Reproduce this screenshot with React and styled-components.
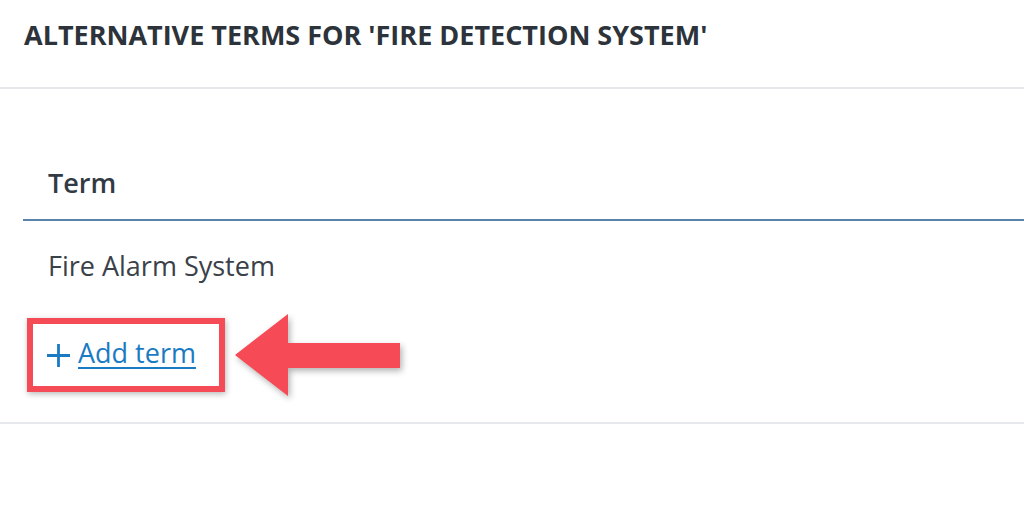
import React from "react";
import styled, { createGlobalStyle } from "styled-components";

const Global = createGlobalStyle`
  html, body { margin: 0; padding: 0; background: #ffffff; }
  body { font-family: "Open Sans", "Noto Sans", sans-serif; }
`;

const Page = styled.div`
  width: 1024px;
  height: 512px;
  background: #ffffff;
  overflow: hidden;
`;

const Header = styled.header`
  padding: 17px 0 34px 24px;
  border-bottom: 2px solid #e6e8eb;
`;

const Title = styled.h1`
  margin: 0;
  font-size: 27px;
  line-height: 36px;
  font-weight: 700;
  color: #2d333a;
`;

const Body = styled.section`
  padding: 76px 0 26px 23px;
  border-bottom: 2px solid #e6e8eb;
`;

const Table = styled.table`
  width: 100%;
  border-collapse: collapse;
`;

const HeadCell = styled.th`
  text-align: left;
  padding: 0 0 18px 25px;
  font-size: 27px;
  line-height: 36px;
  font-weight: 600;
  color: #323b44;
  border-bottom: 2px solid #5b82a8;
`;

const Cell = styled.td`
  padding: 27px 0 0 25px;
  font-size: 27px;
  line-height: 36px;
  font-weight: 400;
  color: #3a4148;
`;

const ActionRow = styled.div`
  display: flex;
  align-items: center;
  gap: 10px;
  margin: 30px 0 0 4px;
`;

const Highlight = styled.div`
  display: inline-flex;
  align-items: center;
  padding: 11px 23px 15px 14px;
  border: 6px solid #f44b56;
  box-shadow: 1px 2px 6px rgba(0, 0, 0, 0.28);
`;

const AddLink = styled.a`
  display: inline-flex;
  align-items: center;
  gap: 8px;
  font-size: 27px;
  line-height: 36px;
  color: #1b7bc2;
  cursor: pointer;
`;

const PlusIcon = styled.svg`
  display: block;
  margin-top: 4px;
`;

const LinkText = styled.span`
  text-decoration: underline;
  text-decoration-thickness: 2px;
  text-underline-offset: 4px;
`;

const Arrow = styled.svg`
  display: block;
  overflow: visible;
  filter: drop-shadow(2px 3px 3px rgba(0, 0, 0, 0.3));
`;

export default function App() {
  return (
    <Page>
      <Global />
      <Header>
        <Title>ALTERNATIVE TERMS FOR 'FIRE DETECTION SYSTEM'</Title>
      </Header>
      <Body>
        <Table>
          <thead>
            <tr>
              <HeadCell>Term</HeadCell>
            </tr>
          </thead>
          <tbody>
            <tr>
              <Cell>Fire Alarm System</Cell>
            </tr>
          </tbody>
        </Table>
        <ActionRow>
          <Highlight>
            <AddLink>
              <PlusIcon width="23" height="23" viewBox="0 0 23 23">
                <path d="M11.5 0 V23 M0 11.5 H23" stroke="#1b7bc2" strokeWidth="2.8" fill="none" />
              </PlusIcon>
              <LinkText>Add term</LinkText>
            </AddLink>
          </Highlight>
          <Arrow width="165" height="82" viewBox="0 0 165 82">
            <path d="M0 41 L53 0 L53 29 L165 29 L165 54 L53 54 L53 82 Z" fill="#f64b56" />
          </Arrow>
        </ActionRow>
      </Body>
    </Page>
  );
}
